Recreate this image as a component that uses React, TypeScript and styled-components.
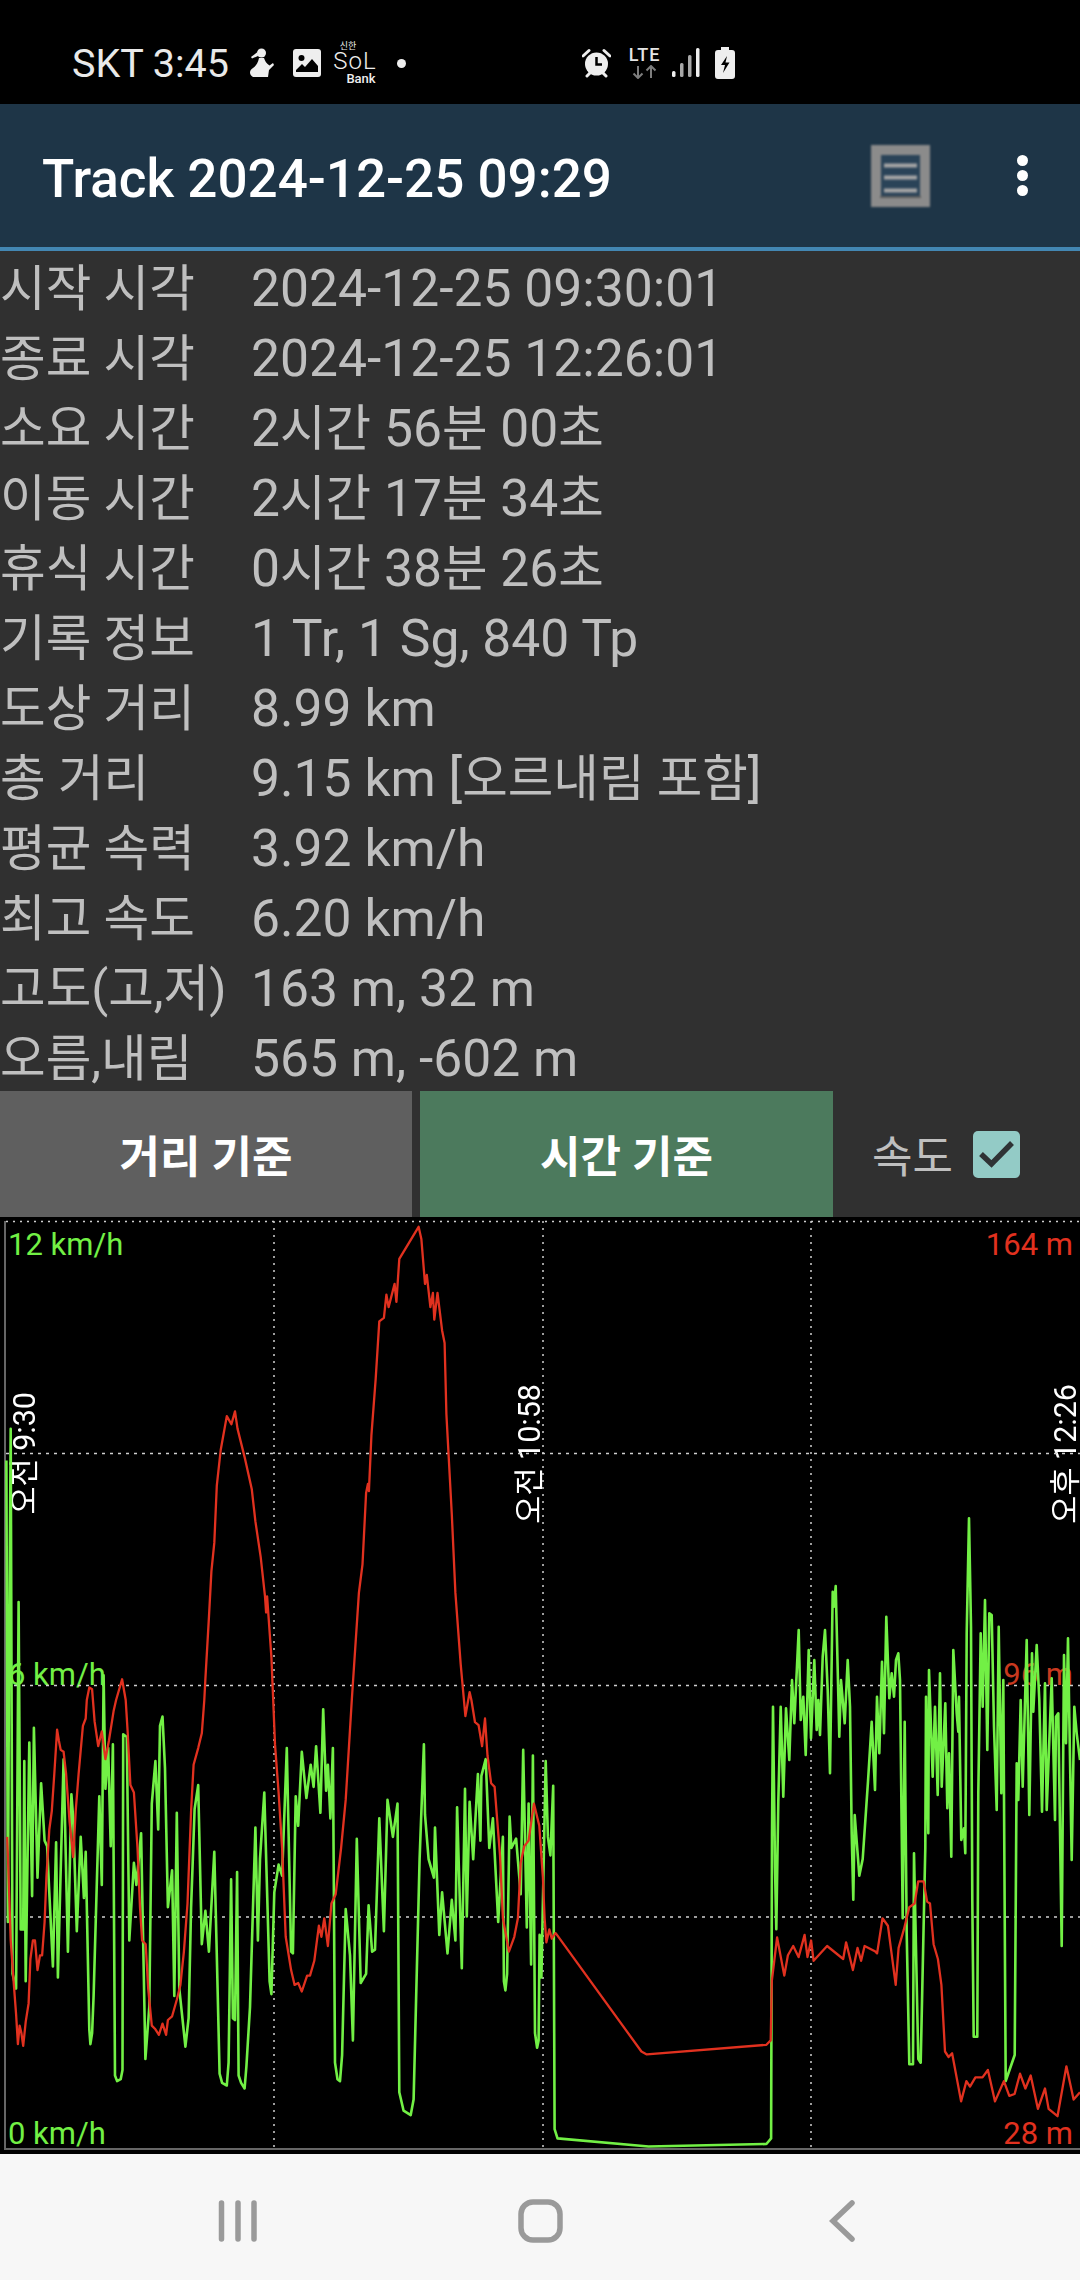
import React from "react";
import styled, { createGlobalStyle } from "styled-components";

const FONT = `Roboto, "Noto Sans CJK KR", sans-serif`;

const Global = createGlobalStyle`
  html, body { margin: 0; padding: 0; background: #303030; }
  body { font-family: ${FONT}; }
  * { box-sizing: border-box; }
`;

const Page = styled.div`
  width: 1080px;
  height: 2280px;
  display: flex;
  flex-direction: column;
  background: #303030;
  overflow: hidden;
`;

const StatusBar = styled.div`
  height: 104px;
  flex: none;
  background: #000;
  padding: 22px 0 0 72px;
  display: flex;
  align-items: center;
  color: #e9e9e9;
`;
const StatusText = styled.span`
  font-size: 39.5px;
  margin-right: 19px;
`;
const StatusIcon = styled.svg<{ $gap: number }>`
  flex: none;
  margin-right: ${(p) => p.$gap}px;
  display: block;
`;
const SolMark = styled.div`
  width: 38px;
  height: 42px;
  margin: 0 23px 0 0;
  display: flex;
  flex-direction: column;
  align-items: center;
  color: #eee;
  line-height: 1;
`;
const SolTop = styled.span`
  font-size: 9px;
  height: 9px;
  margin-right: 14px;
`;
const SolMain = styled.span`
  font-size: 24px;
  height: 20px;
  line-height: 20px;
  font-weight: 300;
  letter-spacing: 1px;
`;
const SolBank = styled.span`
  font-size: 13px;
  height: 13px;
  margin: 1px -4px 0 8px;
  font-weight: 500;
`;
const Dot = styled.span`
  width: 9px;
  height: 9px;
  border-radius: 50%;
  background: #eee;
  margin-right: 176px;
`;
const LteStack = styled.div`
  width: 33px;
  margin-right: 11px;
  display: flex;
  flex-direction: column;
  align-items: center;
  gap: 2px;
`;
const LteText = styled.span`
  font-size: 18px;
  line-height: 16px;
  font-weight: 500;
  color: #e5e5e5;
  letter-spacing: 1px;
`;

const AppBar = styled.header`
  height: 147px;
  flex: none;
  background: #1e3547;
  border-bottom: 4px solid #4387b3;
  display: flex;
  align-items: center;
  padding-left: 42px;
`;
const Title = styled.h1`
  margin: 6px 0 0;
  flex: 1;
  font-size: 53px;
  font-weight: 500;
  color: #fff;
  font-family: ${FONT};
`;
const ListIcon = styled.svg`
  flex: none;
  margin: 0 87px 0 0;
  filter: blur(1.2px);
`;
const More = styled.div`
  display: flex;
  flex-direction: column;
  gap: 4px;
  margin-right: 52px;
`;
const MoreDot = styled.span`
  width: 11px;
  height: 11px;
  border-radius: 50%;
  background: #fff;
`;

const Info = styled.div`
  height: 840px;
  flex: none;
  display: flex;
  flex-direction: column;
`;
const Row = styled.div`
  height: 70px;
  display: flex;
  align-items: baseline;
  line-height: 70px;
  padding-top: 3px;
  font-size: 49.6px;
  color: #bfbfbf;
  white-space: nowrap;
`;
const RowLabel = styled.span`
  width: 251px;
  flex: none;
`;
const RowValue = styled.span`
  font-size: 51.6px;
`;
const Hangul = styled.span`
  font-size: 49.5px;
`;

const Controls = styled.div`
  height: 126px;
  flex: none;
  display: flex;
  align-items: stretch;
`;
const ModeButton = styled.div<{ $active?: boolean }>`
  width: ${(p) => (p.$active ? 413 : 412)}px;
  margin-right: ${(p) => (p.$active ? 0 : 8)}px;
  background: ${(p) => (p.$active ? "#4c7a5d" : "#5f5f5f")};
  color: #fff;
  font-size: 44px;
  font-weight: 700;
  display: flex;
  align-items: center;
  justify-content: center;
`;
const CheckLabel = styled.span`
  font-size: 44px;
  color: #bfbfbf;
  margin-left: 39px;
  align-self: center;
`;
const CheckBox = styled.div`
  width: 47px;
  height: 47px;
  margin-left: 20px;
  align-self: center;
  background: #93cbc6;
  border-radius: 5px;
  display: flex;
  align-items: center;
  justify-content: center;
`;

const Chart = styled.div`
  position: relative;
  flex: none;
  height: 937px;
  background: #000;
  overflow: hidden;
`;
const ChartSvg = styled.svg`
  position: absolute;
  left: 0;
  top: 0;
`;
const AxisLabel = styled.span<{
  $color: string;
  $top: number;
  $left?: number;
  $right?: number;
}>`
  position: absolute;
  top: ${(p) => p.$top}px;
  ${(p) => (p.$left !== undefined ? `left: ${p.$left}px;` : "")}
  ${(p) => (p.$right !== undefined ? `right: ${p.$right}px;` : "")}
  color: ${(p) => p.$color};
  font-size: 31px;
  line-height: 36px;
  white-space: nowrap;
`;
const TimeLabel = styled.span<{ $left: number; $top: number }>`
  position: absolute;
  left: ${(p) => p.$left}px;
  top: ${(p) => p.$top}px;
  writing-mode: vertical-rl;
  text-orientation: sideways;
  transform: rotate(180deg);
  color: #fff;
  font-size: 30.5px;
  line-height: 28px;
  white-space: nowrap;
`;

const NavBar = styled.nav`
  flex: 1;
  background: #f7f7f7;
`;
const NavSvg = styled.svg`
  display: block;
`;

type Pair = [number, number];
const CHART_TOP = 1217;
const p3 = (a: Pair[]) => a.map(([x, y]): Pair => [x / 2.8, 1200 + y / 2.8]);
const p4 = (a: Pair[]) => a.map(([x, y]): Pair => [x / 2.8, 1700 + y / 2.703]);
const p6 = (a: Pair[]) => a.map(([x, y]): Pair => [520 + x / 2.8, 1700 + y / 2.703]);
const z = (a: Pair[]) => a.map(([x, y]): Pair => [760 + x / 3, 1500 + y / 3]);
const toPoints = (a: Pair[]) =>
  a.map(([x, y]) => `${x.toFixed(1)},${(y - CHART_TOP).toFixed(1)}`).join(" ");

const red: Pair[] = [
  ...p4([[20,370],[22,420],[30,650],[38,760],[45,850],[50,930],[55,880],[60,900],[65,935],[72,870],[80,820],[85,700],[92,650],[98,650],[105,730],[112,690],[118,690],[125,600],[130,480],[138,350],[145,300],[152,200],[160,80],[165,110],[170,135],[178,140],[185,200],[195,330],[205,425],[212,300],[220,200],[232,70],[240,50],[243,0]]),
  ...p3([[250,1365],[258,1370],[265,1460]]),
  ...p4([[275,125],[285,85],[295,160],[305,110],[318,30]]),
  ...p3([[325,1400],[342,1342],[352,1400],[358,1500]]),
  ...p4([[358,100],[365,230],[375,250],[385,400],[392,560],[398,650],[408,660],[415,780],[425,880],[435,890],[445,905],[455,875],[465,905],[470,865],[482,855],[495,810],[505,770],[515,680],[525,550],[535,300],[542,175],[555,130],[565,90],[572,0]]),
  ...p3([[575,1340],[585,1170],[592,1040],[600,960],[607,800],[618,700],[635,605],[648,628],[658,592],[665,640],[685,720],[705,810],[715,900],[730,1000],[742,1110],[745,1155],[748,1110],[760,1280],[765,1400]]),
  ...p4([[770,120],[780,250],[790,400],[800,640],[815,730],[825,770],[835,765],[845,788],[860,745],[868,745],[880,705],[893,610],[900,640],[908,590],[918,665],[928,550],[940,525],[955,400],[968,270],[985,0]]),
  ...p3([[985,1400],[1005,1100],[1015,1020],[1025,820],[1030,795],[1033,815],[1040,660],[1052,500],[1062,340],[1075,330],[1082,265],[1088,300],[1105,235],[1110,285],[1118,165],[1172,75],[1180,110],[1190,235],[1195,210],[1205,300],[1212,260],[1216,335],[1225,260],[1238,365],[1245,400],[1250,600],[1265,880],[1275,1100],[1290,1300],[1303,1445],[1315,1378],[1320,1400]]),
  ...p4([[1330,60],[1340,68],[1350,125],[1358,50],[1365,150],[1375,225],[1385,235],[1400,420],[1408,590],[1425,680],[1440,640],[1450,590],[1458,440],[1468,395],[1480,380],[1495,280],[1510,340],[1520,480],[1525,590],[1530,655],[1538,620],[1545,645],[1555,630]]),
  ...p6([[100,630],[340,950],[355,958],[690,932],[702,920],[705,760],[720,642],[740,745],[750,690],[765,665],[780,695],[797,635],[805,695],[815,650],[822,705],[860,665],[905,700],[913,655],[932,730],[945,670],[955,705],[965,665],[995,680],[1000,685],[1015,590],[1030,610],[1052,770],[1060,670],[1075,620],[1090,560],[1105,550],[1115,490],[1130,490],[1140,545],[1148,550],[1158,660],[1170,700],[1180,770],[1190,950],[1200,965],[1210,955],[1235,1085],[1250,1030],[1260,1045],[1275,1020],[1295,1020],[1310,1000],[1330,1085],[1355,1030],[1370,1070],[1385,1065],[1400,1010],[1415,1050],[1430,1015],[1450,1105],[1470,1050],[1480,1105],[1505,1125],[1530,990],[1550,1080],[1568,1060]]),
];

const green: Pair[] = [
  ...p4([[18,-647],[22,600],[25,-30],[30,-733],[35,740],[45,780],[52,-265],[58,620],[65,620],[68,165],[72,760],[82,115],[90,530],[95,75],[105,480],[115,225],[125,380],[132,395],[138,520],[148,720],[157,385],[162,750],[178,160],[190,680],[200,255],[205,320],[215,625],[226,370],[235,535],[240,410],[250,890],[253,930],[258,900],[262,800],[278,260],[285,500],[290,-67],[295,240],[303,130],[310,395],[316,120],[322,1015],[328,1030],[338,1025],[343,1000],[345,93],[355,100],[362,650],[375,440],[382,500],[395,360],[407,970],[418,830],[425,280],[435,165],[443,350],[448,70],[455,45],[462,185],[470,560],[482,460],[488,800],[495,305],[502,780],[519,937],[528,860],[535,560],[545,295],[555,230],[565,660],[575,570],[585,680],[600,410],[607,690],[615,1010],[622,1035],[635,1042],[640,980],[647,485],[652,860],[658,865],[664,465],[668,1015],[675,1035],[685,1050],[690,990],[700,830],[715,345],[722,650],[728,430],[740,250],[755,760],[760,795],[768,520],[780,445],[790,475],[803,130],[815,680],[820,685],[828,260],[835,340],[845,140],[858,265],[870,175],[878,235],[885,125],[897,305],[905,25],[913,245],[918,175],[925,320],[932,130],[938,980],[945,1025],[952,1030],[958,960],[968,565],[980,690],[988,920],[999,375],[1010,765],[1025,740],[1032,555],[1042,680],[1050,675],[1062,320],[1075,625],[1085,270],[1100,370],[1113,280],[1118,1060],[1130,1110],[1150,1122],[1158,1080],[1175,430],[1187,120],[1190,310],[1200,430],[1215,480],[1218,345],[1230,635],[1238,520],[1253,685],[1265,540],[1275,650],[1280,290],[1293,725],[1302,240],[1307,585],[1315,275],[1325,430],[1338,200],[1345,380],[1348,205],[1360,160],[1370,400],[1380,320],[1395,600],[1408,370],[1411,760],[1415,785],[1420,740],[1427,315],[1432,400],[1445,375],[1458,525],[1465,135],[1475,615],[1480,280],[1487,715]]),
  ...p6([[36,150],[42,900],[48,940],[52,920],[55,635],[60,750],[72,165],[78,370],[85,420],[93,232],[97,1160],[105,1185],[360,1207],[690,1200],[703,1185]]),
  ...z([[36,1000],[39,620],[45,1100],[49,1288],[55,905],[62,620],[70,890],[78,625],[88,780],[96,540],[103,670],[116,390],[122,660],[130,590],[137,765],[146,450],[153,715],[163,480],[170,690],[175,600],[180,705],[188,470],[195,390],[203,570],[210,820],[218,275],[222,320],[227,258],[238,710],[243,540],[254,670],[263,480],[270,620],[275,1000],[280,1199],[284,945],[298,1127],[308,1077],[324,844],[335,665],[345,870],[351,590],[358,760],[366,485],[372,700],[379,350],[388,595],[395,520],[402,590],[408,480],[415,460],[420,540],[428,1255],[434,665],[440,1300],[448,1693],[459,1693],[462,1060],[475,1677],[482,1688],[496,1044],[498,590],[505,1000],[507,510],[518,830],[525,620],[533,885],[540,520],[545,860],[556,610],[562,925],[567,760],[574,1070],[580,450],[590,640],[595,695],[597,590],[604,1020],[612,985],[616,1060],[620,400],[627,55],[633,380],[637,1200],[641,1610],[652,1610],[655,880],[662,400],[668,620],[675,300],[682,750],[688,340],[695,345],[702,680],[710,930],[716,380],[724,880],[730,540],[737,1743],[764,1665],[770,790],[775,900],[782,600],[788,860],[800,420],[808,945],[816,460],[820,635],[830,435],[838,600],[846,935],[855,550],[860,930],[875,535],[885,960],[888,650],[895,640],[905,1338],[912,465],[918,730],[924,415],[935,1080],[943,620],[950,700],[960,780]]),
];

const rows: [string, string][] = [
  ["시작 시각", "2024-12-25 09:30:01"],
  ["종료 시각", "2024-12-25 12:26:01"],
  ["소요 시간", "2시간 56분 00초"],
  ["이동 시간", "2시간 17분 34초"],
  ["휴식 시간", "0시간 38분 26초"],
  ["기록 정보", "1 Tr, 1 Sg, 840 Tp"],
  ["도상 거리", "8.99 km"],
  ["총 거리", "9.15 km [오르내림 포함]"],
  ["평균 속력", "3.92 km/h"],
  ["최고 속도", "6.20 km/h"],
  ["고도(고,저)", "163 m, 32 m"],
  ["오름,내림", "565 m, -602 m"],
];

const H_LINES = [1453.5, 1685.5, 1917];
const V_LINES = [274, 543, 811];
const GREEN = "#72f045";
const RED = "#e1311f";

const mixed = (text: string) =>
  text.split(/([가-힣]+(?: [가-힣]+)*)/).map((part, i) =>
    i % 2 ? <Hangul key={i}>{part}</Hangul> : part
  );

export default function App() {
  return (
    <Page>
      <Global />
      <StatusBar>
        <StatusText>SKT 3:45</StatusText>
        <StatusIcon $gap={19} width="26" height="30" viewBox="0 0 26 30" fill="#eee">
          <circle cx="13.5" cy="5" r="4.5" />
          <path d="M9.5 4 L3 9 L4 10.5 L10 8 Z" />
          <path d="M11 10 L16 10 C17 13 18 15 21.5 17.5 L25 15 L26 17 L21 22 L20 29 L5 29 C1 27 1 22 5 20 C8 18 10 15 11 10 Z" />
        </StatusIcon>
        <StatusIcon $gap={15} width="28" height="28" viewBox="0 0 28 28">
          <rect width="28" height="28" rx="3" fill="#eee" />
          <circle cx="8.5" cy="9" r="3" fill="#000" />
          <path d="M3 23 L3 21 L9 15 L12 18 L19 10 L25 17 L25 23 Z" fill="#000" />
        </StatusIcon>
        <SolMark>
          <SolTop>신한</SolTop>
          <SolMain>SoL</SolMain>
          <SolBank>Bank</SolBank>
        </SolMark>
        <Dot />
        <StatusIcon $gap={17} width="29" height="30" viewBox="0 0 29 30">
          <circle cx="14.5" cy="16" r="11.5" fill="#eee" />
          <path d="M14.5 9 V16.5 H20" stroke="#000" strokeWidth="2.5" fill="none" />
          <path d="M1 8 L7 2.5 M28 8 L22 2.5" stroke="#eee" strokeWidth="3" strokeLinecap="round" />
          <path d="M5 28 L8 25 M24 28 L21 25" stroke="#eee" strokeWidth="3" strokeLinecap="round" />
        </StatusIcon>
        <LteStack>
          <LteText>LTE</LteText>
          <svg width="33" height="14" viewBox="0 0 33 14">
            <path d="M10 1 V13 M5.5 8.5 L10 13 L14.5 8.5 M23 13 V1 M18.5 5.5 L23 1 L27.5 5.5" stroke="#7d7d7d" strokeWidth="2" fill="none" />
          </svg>
        </LteStack>
        <StatusIcon $gap={15} width="28" height="30" viewBox="0 0 28 30" fill="#eee">
          <rect x="0" y="23" width="3.5" height="6" rx="1.5" />
          <rect x="8" y="15" width="3.5" height="14" rx="1.5" fill="#a8a8a8" />
          <rect x="16" y="7" width="3.5" height="22" rx="1.5" fill="#a8a8a8" />
          <rect x="24" y="0" width="3.5" height="29" rx="1.5" />
        </StatusIcon>
        <StatusIcon $gap={0} width="20" height="32" viewBox="0 0 20 32">
          <path d="M6 0 H14 V3 H17 Q20 3 20 6 V29 Q20 32 17 32 H3 Q0 32 0 29 V6 Q0 3 3 3 H6 Z" fill="#eee" />
          <path d="M12 9 L6 18 H10 L8 26 L14.5 15.5 H10.5 Z" fill="#000" />
        </StatusIcon>
      </StatusBar>

      <AppBar>
        <Title>Track 2024-12-25 09:29</Title>
        <ListIcon width="59" height="62" viewBox="0 0 59 62">
          <rect width="59" height="62" fill="#8b8b8b" />
          <rect x="10" y="10" width="39" height="42" fill="#2a4358" />
          <rect x="13" y="18.5" width="33" height="4" fill="#a6a6a6" />
          <rect x="13" y="30.5" width="33" height="4" fill="#a6a6a6" />
          <rect x="13" y="43.5" width="33" height="4" fill="#a6a6a6" />
          <rect x="9" y="51" width="41" height="2" fill="#5c5c5c" />
        </ListIcon>
        <More>
          <MoreDot />
          <MoreDot />
          <MoreDot />
        </More>
      </AppBar>

      <Info>
        {rows.map(([label, value]) => (
          <Row key={label}>
            <RowLabel>{label}</RowLabel>
            <RowValue>{mixed(value)}</RowValue>
          </Row>
        ))}
      </Info>

      <Controls>
        <ModeButton>거리 기준</ModeButton>
        <ModeButton $active>시간 기준</ModeButton>
        <CheckLabel>속도</CheckLabel>
        <CheckBox>
          <svg width="37" height="31" viewBox="0 0 37 31">
            <path d="M3 15 L13.5 25 L34 4" fill="none" stroke="#2f3335" strokeWidth="5.5" />
          </svg>
        </CheckBox>
      </Controls>

      <Chart>
        <AxisLabel $color={GREEN} $top={10} $left={8}>12 km/h</AxisLabel>
        <AxisLabel $color={RED} $top={10} $right={7}>164 m</AxisLabel>
        <AxisLabel $color={GREEN} $top={440} $left={8}>6 km/h</AxisLabel>
        <AxisLabel $color="#c9391f" $top={440} $right={7}>96 m</AxisLabel>
        <AxisLabel $color={GREEN} $top={899} $left={8}>0 km/h</AxisLabel>
        <AxisLabel $color={RED} $top={899} $right={7}>28 m</AxisLabel>
        <TimeLabel $left={11} $top={175}>오전 9:30</TimeLabel>
        <TimeLabel $left={516} $top={167}>오전 10:58</TimeLabel>
        <TimeLabel $left={1052} $top={167}>오후 12:26</TimeLabel>
        <ChartSvg width="1080" height="937" viewBox="0 0 1080 937">
          <line x1="6" y1="4.5" x2="1080" y2="4.5" stroke="#cfcfcf" strokeWidth="1.5" strokeDasharray="2 5" />
          {H_LINES.map((y) => (
            <line key={y} x1="6" y1={y - CHART_TOP} x2="1080" y2={y - CHART_TOP} stroke="#cfcfcf" strokeWidth="1.5" strokeDasharray="3 5" />
          ))}
          {V_LINES.map((x) => (
            <line key={x} x1={x} y1="4" x2={x} y2="932" stroke="#cfcfcf" strokeWidth="1.5" strokeDasharray="2 5" />
          ))}
          <path d="M5 4 V932 H1080" fill="none" stroke="#666" strokeWidth="2" />
          <polyline points={toPoints(green)} fill="none" stroke={GREEN} strokeWidth="2.6" strokeLinejoin="round" />
          <polyline points={toPoints(red)} fill="none" stroke={RED} strokeWidth="2.3" strokeLinejoin="round" />
        </ChartSvg>
      </Chart>

      <NavBar>
        <NavSvg width="1080" height="126" viewBox="0 0 1080 126">
          <g stroke="#9a9a9a" strokeWidth="5.5" strokeLinecap="round" fill="none">
            <path d="M221.5 49 V85 M238 49 V85 M254 49 V85" />
            <rect x="521" y="48" width="39" height="38" rx="12" />
            <path d="M852 49 L833 67 L852 85" />
          </g>
        </NavSvg>
      </NavBar>
    </Page>
  );
}
